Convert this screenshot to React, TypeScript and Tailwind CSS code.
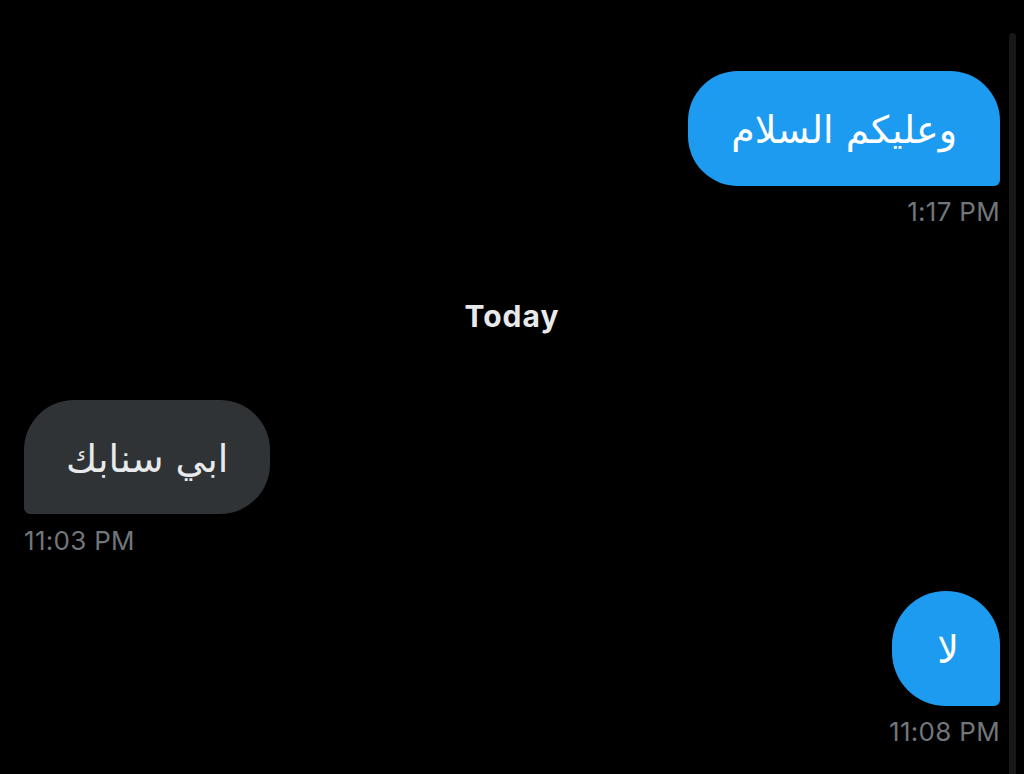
const latin = "font-['Inter','Liberation_Sans',sans-serif]"
const arabic = "font-['DejaVu_Sans','Noto_Sans',sans-serif]"

function Stamp({ time, align }: { time: string; align: "left" | "right" }) {
  return (
    <div
      className={`${latin} text-[26px] leading-[30px] tracking-[0.3px] text-[#71767b] ${
        align === "right" ? "self-end" : "self-start"
      }`}
    >
      {time}
    </div>
  )
}

export default function App() {
  return (
    <div className="flex h-[774px] w-[1024px] overflow-hidden bg-black pl-[24px] pr-[8px]">
      {/* conversation */}
      <div className="flex w-[976px] flex-col pt-[71px]">
        <div
          dir="rtl"
          className={`${arabic} flex h-[115px] items-center self-end rounded-[50px] rounded-br-[6px] bg-[#1d9bf0] px-[43px] pt-[4px] text-[38px] text-white`}
        >
          وعليكم السلام
        </div>
        <div className="mt-[11px] flex flex-col">
          <Stamp time="1:17 PM" align="right" />
        </div>

        <div
          className={`${latin} mt-[72px] self-center text-[30px] font-bold leading-[34px] tracking-[1px] text-[#e7e9ea]`}
        >
          Today
        </div>

        <div
          dir="rtl"
          className={`${arabic} mt-[67px] flex h-[114px] items-center self-start rounded-[50px] rounded-bl-[6px] bg-[#2f3336] px-[42px] pt-[4px] text-[38px] text-[#e7e9ea]`}
        >
          ابي سنابك
        </div>
        <div className="mt-[12px] flex flex-col">
          <Stamp time="11:03 PM" align="left" />
        </div>

        <div
          dir="rtl"
          className={`${arabic} mt-[35px] flex h-[115px] w-[108px] items-center justify-center self-end rounded-[54px] rounded-br-[6px] bg-[#1d9bf0] pl-[4px] pt-[4px] text-[38px] text-white`}
        >
          لا
        </div>
        <div className="mt-[11px] flex flex-col">
          <Stamp time="11:08 PM" align="right" />
        </div>
      </div>

      {/* scrollbar */}
      <div className="ml-[9px] mt-[33px] h-[760px] w-[7px] rounded-full bg-[#181818]" />
    </div>
  )
}
